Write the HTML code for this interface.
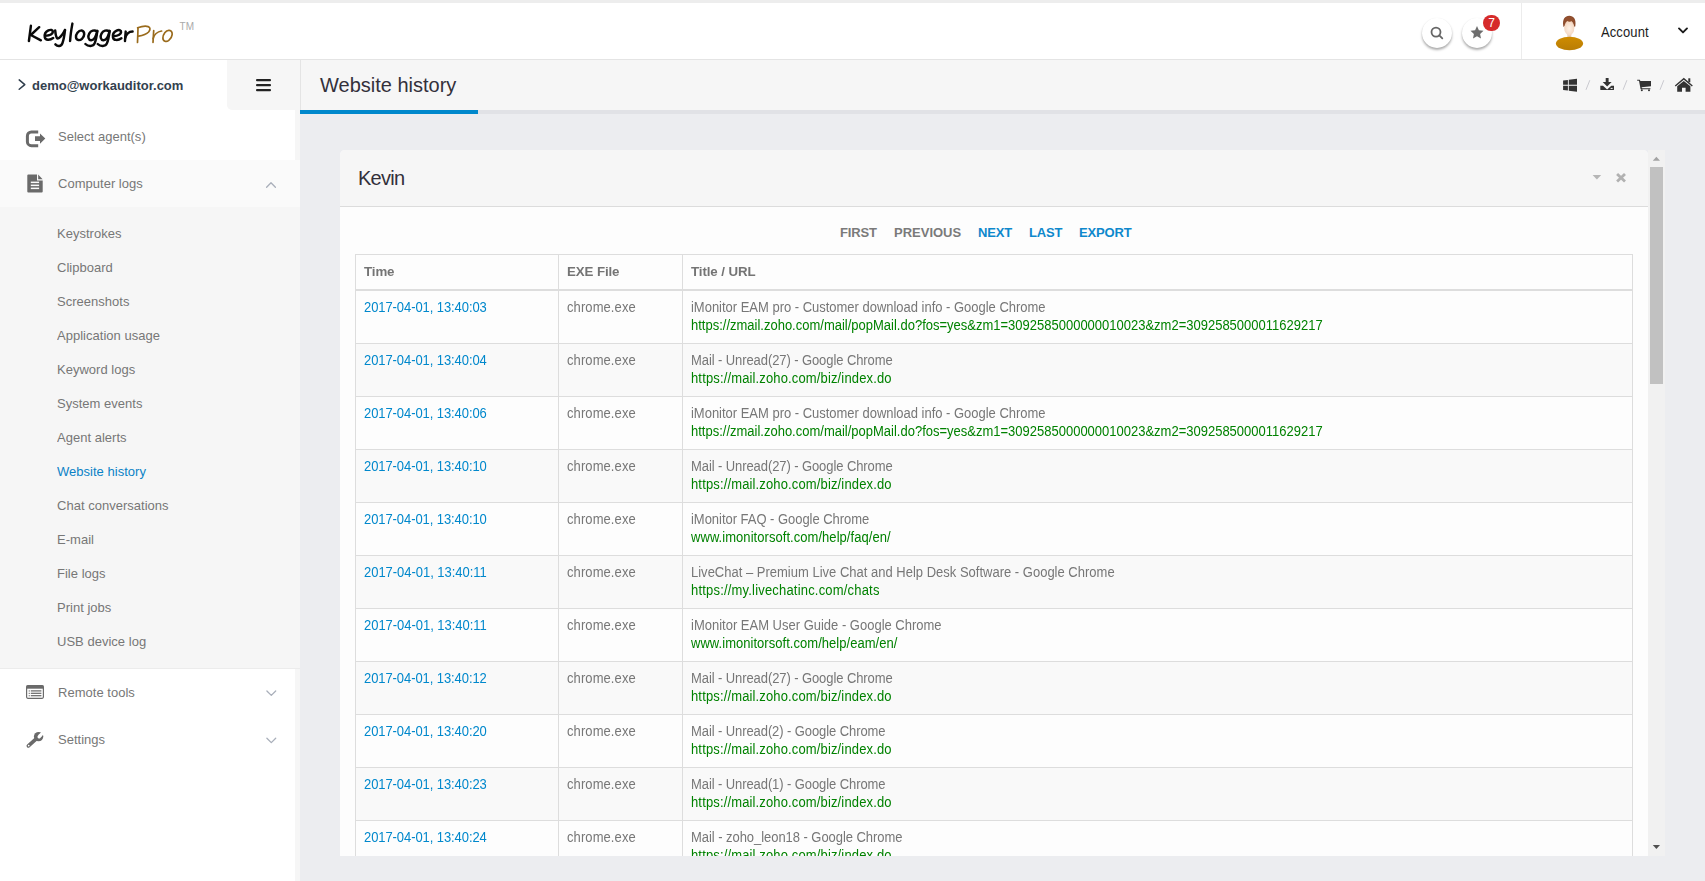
<!DOCTYPE html>
<html>
<head>
<meta charset="utf-8">
<title>Website history</title>
<style>
*{box-sizing:border-box;margin:0;padding:0}
html,body{width:1705px;height:881px;overflow:hidden;background:#ecedf0;font-family:"Liberation Sans",sans-serif;font-size:13px;color:#777}
a{text-decoration:none;color:inherit}
#topstrip{position:absolute;left:0;top:0;width:1705px;height:3px;background:#ededed}
#header{position:absolute;left:0;top:3px;width:1705px;height:57px;background:#fff;border-bottom:1px solid #e4e4e4}
#logo{position:absolute;left:0;top:0}
#sidebar{position:absolute;left:0;top:60px;width:300px;height:821px;background:#f6f6f6}
#sidebar .white{position:absolute;left:0;width:295px;background:#fff}
#userrow{position:absolute;left:0;top:0;width:227px;height:50px;background:#fff}
#userrow .em{position:absolute;left:32px;top:18px;font-size:13px;font-weight:bold;color:#33414e;letter-spacing:0}
#burger{position:absolute;left:227px;top:0;width:73px;height:50px;background:#f6f6f6;border-bottom-left-radius:5px}
.mi{position:absolute;left:0;width:295px;height:47px}
.mi .t{position:absolute;left:58px;top:16px;font-size:13px;letter-spacing:0.02px;transform:scaleY(1.05);transform-origin:50% 72%;color:#777;line-height:16px;white-space:nowrap}
.mi svg{position:absolute}
#sub{position:absolute;left:0;top:147px;width:300px;height:462px;background:#f6f6f6;border-bottom:1px solid #ececec}
#sub a{position:absolute;left:57px;margin-top:1px;font-size:13px;letter-spacing:0.02px;transform:scaleY(1.05);transform-origin:50% 72%;line-height:16px;color:#777;white-space:nowrap}
#sub a.act{color:#0b82c6}
#titlebar{position:absolute;left:300px;top:60px;width:1405px;height:54px;background:#f6f6f6;border-left:1px solid #e4e4e4}
#titlebar .ul{position:absolute;left:-1px;top:50px;width:1405px;height:4px;background:#e1e2e6}
#titlebar .ulb{position:absolute;left:-1px;top:50px;width:178px;height:4px;background:#0088cc}
#titlebar h1{position:absolute;left:19px;top:13px;font-size:20px;font-weight:normal;color:#33303a;line-height:24px;white-space:nowrap}
#panel{position:absolute;left:340px;top:150px;width:1308px;height:706px;background:#fdfdfd;border-top-left-radius:5px;border-top-right-radius:5px;overflow:hidden}
#phead{position:absolute;left:0;top:0;width:1308px;height:57px;background:#f6f6f6;border-bottom:1px solid #dcdcdc}
#phead h2{position:absolute;left:18px;top:16px;font-size:20px;font-weight:normal;color:#33303a;line-height:24px;letter-spacing:-0.75px}
#pager{position:absolute;left:0;top:75px;width:1293px;font-size:13px;font-weight:bold;line-height:16px;color:#7a7a7a;white-space:nowrap}
#pager span{position:absolute;top:0;letter-spacing:-0.15px}
#pager .b{color:#0e88cc}
table{will-change:transform;position:absolute;left:15px;top:104px;width:1278px;border-collapse:separate;border-spacing:0;table-layout:fixed;font-size:13px;border-top:1px solid #ddd;border-left:1px solid #ddd}
th,td{border-right:1px solid #dddddd;border-bottom:1px solid #dddddd;padding:0 8px;text-align:left;vertical-align:top;line-height:18px;white-space:nowrap;overflow:hidden}
th{height:36px;padding-top:8px;color:#747474;font-weight:bold;border-bottom:2px solid #dddddd;font-size:13.3px;letter-spacing:-0.1px}
td{height:53px;padding-top:9px;color:#777;font-size:13px}
td span{display:inline-block;white-space:nowrap;transform:translateY(-0.6px) scaleY(1.06);transform-origin:50% 72%}
tr.odd td{background:#f9f9f9}
td.tm{color:#0088cc}
td .u{color:#008200}
#sb{position:absolute;left:1648px;top:150px;width:17px;height:706px;background:#f1f1f1}
#sb .th{position:absolute;left:2px;top:17px;width:13px;height:217px;background:#c1c1c1}
.cbtn{position:absolute;top:15px;width:30px;height:30px;border-radius:50%;background:#fff;box-shadow:0 2px 2.5px rgba(0,0,0,.33),0 0 1px rgba(0,0,0,.06)}
#badge{position:absolute;left:1483px;top:12px;width:17px;height:16px;border-radius:8px;background:#d62b2b;color:#fff;font-size:12px;line-height:16px;text-align:center}
#hdiv{position:absolute;left:1521px;top:0;width:1px;height:56px;background:#ececec}
#acct{position:absolute;left:1601px;top:22px;font-size:13px;line-height:16px;color:#1c1c1c;letter-spacing:0.1px;transform:scaleY(1.06);transform-origin:50% 72%}
</style>
</head>
<body>
<div id="topstrip"></div>
<div id="header">
<svg id="logo" width="210" height="57" viewBox="0 3 210 57" style="position:absolute;left:0;top:0" fill="none" stroke-linecap="round" stroke-linejoin="round">
<g stroke="#0a0a0a" stroke-width="2.45">
<path d="M30.9 25.8 L28.9 41"/><path d="M39.2 27.2 L30.8 35 L40.9 40.3"/>
<path d="M45.2 35.9 C48.5 35.6 52.6 34.3 52.9 31.9 C53.1 30 50.6 29.3 48.4 30.4 C45.8 31.7 44.3 34.6 44.8 37.2 C45.4 40.2 49.6 40.6 53.2 38"/>
<path d="M55.2 30.5 C55.4 33.5 55.8 36.3 57 38.2 C59 39.6 63 34 65 30"/><path d="M65 30 C64.6 34 63.8 39.5 62.4 43.2 C61 46.8 57.5 46.6 55.4 44.3"/>
<path d="M72.4 23.6 C71.4 29 70.4 35.5 70.1 41"/>
<path d="M81.6 30.4 C78.4 30.6 75.6 34.2 76 37.4 C76.4 40.6 79.8 40.8 82 38.8 C84.6 36.4 85.4 31.6 81.6 30.4 Z"/>
<path d="M96.9 31.2 C94.5 29.6 90.8 30.6 89.2 33.6 C87.6 36.6 88.4 40 91 40.2 C93.6 40.4 96 36.6 97.3 31"/><path d="M97.3 31 C96.8 35 96 40 94.6 43.4 C93.2 46.8 88.2 46.8 85.4 44"/>
<path d="M109.2 31.2 C106.8 29.6 103.1 30.6 101.5 33.6 C99.9 36.6 100.7 40 103.3 40.2 C105.9 40.4 108.3 36.6 109.6 31"/><path d="M109.6 31 C109.1 35 108.3 40 106.9 43.4 C105.5 46.8 100.5 46.8 97.7 44"/>
<path d="M113.4 36.2 C116.7 35.9 120.8 34.5 121.1 32.1 C121.3 30.2 118.8 29.5 116.6 30.6 C114 31.9 112.5 34.8 113 37.4 C113.6 40.4 117.8 40.8 121.4 38.2"/>
<path d="M125.7 31.6 C125.5 34.6 125.1 38 125 41"/><path d="M125.2 38 C126 34.6 128.8 31.4 132.6 31.4"/>
</g>
<g stroke="#9a6b1c" stroke-width="1.7">
<path d="M138 27.8 C137.9 32.6 137.7 37.8 137.5 42.5"/><path d="M137.6 27.8 C141 26.6 145.6 25.8 148.2 26.6 C150.6 27.4 150.4 30 148.6 32 C146.2 34.4 142 35.6 138.6 36.2"/>
<path d="M153.7 30.6 C153.5 34.6 153.2 38.6 153 42.4"/><path d="M153.1 38.6 C154 35 157.4 31.6 161.6 31"/>
<path d="M169.2 30.4 C165.8 30 162.9 34.4 162.9 38 C162.9 41.6 166.4 42.2 168.8 40.4 C172.6 37.6 173.8 31.2 169.2 30.4 Z"/>
</g>
<text x="179.6" y="30.1" font-family="Liberation Sans" font-size="10" fill="#aaaaaa" stroke="none">TM</text>
</svg>
<div class="cbtn" style="left:1422px"><svg width="30" height="30" viewBox="0 0 30 30" fill="none" stroke="#666" stroke-width="1.8"><circle cx="14" cy="14.1" r="4.5"/><path d="M17.3 17.4 L20.3 20.4" stroke-linecap="round"/></svg></div>
<div class="cbtn" style="left:1462px"><svg width="30" height="30" viewBox="0 0 30 30"><path fill="#6e6e6e" d="M15 8 L16.9 12.3 L21.5 12.8 L18.1 15.9 L19 20.5 L15 18.2 L11 20.5 L11.9 15.9 L8.5 12.8 L13.1 12.3 Z"/></svg></div>
<div id="badge">7</div>
<div id="hdiv"></div>
<svg id="avatar" width="30" height="38" viewBox="0 0 30 38" style="position:absolute;left:1555px;top:11px">
<defs><radialGradient id="fg" cx="50%" cy="55%" r="60%"><stop offset="0" stop-color="#fdf1e6"/><stop offset="0.7" stop-color="#f6dcc8"/><stop offset="1" stop-color="#e2b99c"/></radialGradient>
<linearGradient id="bg" x1="0" y1="0" x2="0" y2="1"><stop offset="0" stop-color="#cf8c00"/><stop offset="1" stop-color="#b97d05"/></linearGradient></defs>
<rect x="12.3" y="18" width="4" height="6" fill="#e9d2c0"/>
<ellipse cx="14.5" cy="29.5" rx="13.6" ry="6.7" fill="url(#bg)"/>
<path d="M8.3 12 C7.2 5 10 1.7 14.3 1.7 C18.6 1.7 21.4 5 20.3 12 C20 13.4 19.4 13 19.2 12 L9.4 12 C9.2 13 8.6 13.4 8.3 12 Z" fill="#8a4a2c"/>
<ellipse cx="14.3" cy="13.7" rx="5" ry="7.4" fill="url(#fg)"/>
<path d="M9.2 11.8 C9 7.4 10.8 5.8 12.4 7 C13.8 8.2 15.8 7.8 16.8 6.8 C18.4 6.2 19.6 8 19.4 11.8 C20.4 6.4 18.4 2.6 14.3 2.6 C10.2 2.6 8.2 6.4 9.2 11.8 Z" fill="#93502e"/>
</svg>
<div id="acct">Account</div>
<svg width="12" height="9" viewBox="0 0 12 9" style="position:absolute;left:1677px;top:23px" fill="none" stroke="#1a1a1a" stroke-width="1.9" stroke-linecap="round" stroke-linejoin="round"><path d="M2 2.4 L6 6.4 L10 2.4"/></svg>
</div>
<div id="sidebar">
  <div class="white" style="top:0;height:100px"></div>
  <div id="userrow"><span class="em">demo@workauditor.com</span></div>
  <div id="burger"></div>
  <div class="mi" style="top:53px"><span class="t">Select agent(s)</span></div>
  <div class="mi" style="top:100px;width:300px;background:#fafafa"><span class="t">Computer logs</span></div>
  <div id="sub">
    <a style="top:18px">Keystrokes</a>
    <a style="top:52px">Clipboard</a>
    <a style="top:86px">Screenshots</a>
    <a style="top:120px">Application usage</a>
    <a style="top:154px">Keyword logs</a>
    <a style="top:188px">System events</a>
    <a style="top:222px">Agent alerts</a>
    <a style="top:256px" class="act">Website history</a>
    <a style="top:290px">Chat conversations</a>
    <a style="top:324px">E-mail</a>
    <a style="top:358px">File logs</a>
    <a style="top:392px">Print jobs</a>
    <a style="top:426px">USB device log</a>
  </div>
  <div class="white" style="top:609px;height:212px"></div>
  <div class="mi" style="top:609px"><span class="t">Remote tools</span></div>
  <div class="mi" style="top:656px"><span class="t">Settings</span></div>
</div>
<div id="titlebar"><div class="ul"></div><div class="ulb"></div><h1>Website history</h1></div>
<div id="panel">
  <div id="phead"><h2>Kevin</h2></div>
  <div id="pager"><span style="left:500px">FIRST</span><span style="left:554px;letter-spacing:0">PREVIOUS</span><span class="b" style="left:638px">NEXT</span><span class="b" style="left:689px">LAST</span><span class="b" style="left:739px">EXPORT</span></div>
  <table>
    <colgroup><col style="width:203px"><col style="width:124px"><col></colgroup>
    <tr><th>Time</th><th>EXE File</th><th>Title / URL</th></tr>
<!--ROWS-->
    <tr><td class="tm"><span style="letter-spacing:-0.080px">2017-04-01, 13:40:03</span></td><td><span style="letter-spacing:0.086px">chrome.exe</span></td><td><span style="letter-spacing:-0.016px">iMonitor EAM pro - Customer download info - Google Chrome</span><br><span class="u" style="letter-spacing:-0.002px">https://zmail.zoho.com/mail/popMail.do?fos=yes&amp;zm1=3092585000000010023&amp;zm2=3092585000011629217</span></td></tr>
    <tr class="odd"><td class="tm"><span style="letter-spacing:-0.080px">2017-04-01, 13:40:04</span></td><td><span style="letter-spacing:0.086px">chrome.exe</span></td><td><span style="letter-spacing:-0.087px">Mail - Unread(27) - Google Chrome</span><br><span class="u" style="letter-spacing:0.142px">https://mail.zoho.com/biz/index.do</span></td></tr>
    <tr><td class="tm"><span style="letter-spacing:-0.080px">2017-04-01, 13:40:06</span></td><td><span style="letter-spacing:0.086px">chrome.exe</span></td><td><span style="letter-spacing:-0.016px">iMonitor EAM pro - Customer download info - Google Chrome</span><br><span class="u" style="letter-spacing:-0.002px">https://zmail.zoho.com/mail/popMail.do?fos=yes&amp;zm1=3092585000000010023&amp;zm2=3092585000011629217</span></td></tr>
    <tr class="odd"><td class="tm"><span style="letter-spacing:-0.080px">2017-04-01, 13:40:10</span></td><td><span style="letter-spacing:0.086px">chrome.exe</span></td><td><span style="letter-spacing:-0.087px">Mail - Unread(27) - Google Chrome</span><br><span class="u" style="letter-spacing:0.142px">https://mail.zoho.com/biz/index.do</span></td></tr>
    <tr><td class="tm"><span style="letter-spacing:-0.080px">2017-04-01, 13:40:10</span></td><td><span style="letter-spacing:0.086px">chrome.exe</span></td><td><span style="letter-spacing:-0.033px">iMonitor FAQ - Google Chrome</span><br><span class="u" style="letter-spacing:0.050px">www.imonitorsoft.com/help/faq/en/</span></td></tr>
    <tr class="odd"><td class="tm"><span style="letter-spacing:-0.030px">2017-04-01, 13:40:11</span></td><td><span style="letter-spacing:0.086px">chrome.exe</span></td><td><span style="letter-spacing:0.003px">LiveChat – Premium Live Chat and Help Desk Software - Google Chrome</span><br><span class="u" style="letter-spacing:0.189px">https://my.livechatinc.com/chats</span></td></tr>
    <tr><td class="tm"><span style="letter-spacing:-0.030px">2017-04-01, 13:40:11</span></td><td><span style="letter-spacing:0.086px">chrome.exe</span></td><td><span style="letter-spacing:-0.003px">iMonitor EAM User Guide - Google Chrome</span><br><span class="u" style="letter-spacing:0.037px">www.imonitorsoft.com/help/eam/en/</span></td></tr>
    <tr class="odd"><td class="tm"><span style="letter-spacing:-0.080px">2017-04-01, 13:40:12</span></td><td><span style="letter-spacing:0.086px">chrome.exe</span></td><td><span style="letter-spacing:-0.087px">Mail - Unread(27) - Google Chrome</span><br><span class="u" style="letter-spacing:0.142px">https://mail.zoho.com/biz/index.do</span></td></tr>
    <tr><td class="tm"><span style="letter-spacing:-0.080px">2017-04-01, 13:40:20</span></td><td><span style="letter-spacing:0.086px">chrome.exe</span></td><td><span style="letter-spacing:-0.088px">Mail - Unread(2) - Google Chrome</span><br><span class="u" style="letter-spacing:0.142px">https://mail.zoho.com/biz/index.do</span></td></tr>
    <tr class="odd"><td class="tm"><span style="letter-spacing:-0.080px">2017-04-01, 13:40:23</span></td><td><span style="letter-spacing:0.086px">chrome.exe</span></td><td><span style="letter-spacing:-0.088px">Mail - Unread(1) - Google Chrome</span><br><span class="u" style="letter-spacing:0.142px">https://mail.zoho.com/biz/index.do</span></td></tr>
    <tr><td class="tm"><span style="letter-spacing:-0.080px">2017-04-01, 13:40:24</span></td><td><span style="letter-spacing:0.086px">chrome.exe</span></td><td><span style="letter-spacing:-0.051px">Mail - zoho_leon18 - Google Chrome</span><br><span class="u" style="letter-spacing:0.142px">https://mail.zoho.com/biz/index.do</span></td></tr>
<!--/ROWS-->
  </table>
</div>
<div id="sb"><div class="th"></div></div>
<svg id="icons" width="1705" height="881" viewBox="0 0 1705 881" style="position:absolute;left:0;top:0;pointer-events:none">
<!-- email chevron -->
<path d="M19.2 79.9 L24.8 84.6 L19.2 89.3" fill="none" stroke="#2f3d4c" stroke-width="1.5" stroke-linecap="round" stroke-linejoin="round"/>
<!-- burger -->
<g fill="#222"><rect x="256" y="79" width="15" height="2.2" rx="1"/><rect x="256" y="84" width="15" height="2.2" rx="1"/><rect x="256" y="89" width="15" height="2.2" rx="1"/></g>
<!-- sign-out -->
<path d="M38.2 131.9 H31.4 a4 4 0 0 0 -4 4 v5.8 a4 4 0 0 0 4 4 H38.2" fill="none" stroke="#6a6a6a" stroke-width="3"/>
<path d="M35 136.2 H40 V133.4 L45.3 138.6 L40 143.8 V141 H35 Z" fill="#6a6a6a"/>
<!-- file-text -->
<path d="M28.3 174.4 H37 V180.4 H42.7 V191.6 a1 1 0 0 1 -1 1 H28.3 a1 1 0 0 1 -1 -1 V175.4 a1 1 0 0 1 1 -1 Z" fill="#6a6a6a"/>
<path d="M38.2 174.6 L42.6 179.2 H38.2 Z" fill="#6a6a6a"/>
<g fill="#fafafa"><rect x="30.8" y="181.6" width="8.3" height="1.5"/><rect x="30.8" y="184.6" width="8.3" height="1.5"/><rect x="30.8" y="187.6" width="8.3" height="1.5"/></g>
<!-- chevrons -->
<path d="M266.6 187.2 L271 182.8 L275.4 187.2" fill="none" stroke="#a9afba" stroke-width="1.3" stroke-linecap="round" stroke-linejoin="round"/>
<path d="M266.9 691 L271.3 695.4 L275.7 691" fill="none" stroke="#a9afba" stroke-width="1.3" stroke-linecap="round" stroke-linejoin="round"/>
<path d="M266.9 738.2 L271.3 742.6 L275.7 738.2" fill="none" stroke="#a9afba" stroke-width="1.3" stroke-linecap="round" stroke-linejoin="round"/>
<!-- list-alt -->
<rect x="26.6" y="685.7" width="16.8" height="12.6" rx="1.2" fill="#fff" stroke="#6a6a6a" stroke-width="1.2"/>
<rect x="26.6" y="685.7" width="16.8" height="3" fill="#6a6a6a"/>
<g fill="#666"><rect x="30.8" y="690.3" width="10.6" height="1.2"/><rect x="30.8" y="692.7" width="10.6" height="1.2"/><rect x="30.8" y="695.1" width="10.6" height="1.2"/>
<rect x="28.7" y="690.4" width="1.1" height="1.1"/><rect x="28.7" y="692.8" width="1.1" height="1.1"/><rect x="28.7" y="695.2" width="1.1" height="1.1"/></g>
<!-- wrench -->
<path d="M28.4 745.9 L37 738.2" fill="none" stroke="#6a6a6a" stroke-width="3.7" stroke-linecap="round"/>
<circle cx="38.6" cy="736.6" r="4.7" fill="#6a6a6a"/>
<path d="M39.7 736.1 L44.9 730.5" fill="none" stroke="#fff" stroke-width="3.3"/>
<path d="M39.9 735.9 L39.1 736.8" fill="none" stroke="#fff" stroke-width="3.3" stroke-linecap="round"/>
<circle cx="28.7" cy="745.6" r="0.85" fill="#fff"/>
<!-- toolbar: windows -->
<g fill="#333"><path d="M1563.1 80.5 L1567.9 79.9 V84.8 H1563.1 Z"/><path d="M1568.8 79.8 L1577 78.7 V84.8 H1568.8 Z"/><path d="M1563.1 85.7 H1567.9 V90.6 L1563.1 90 Z"/><path d="M1568.8 85.7 H1577 V91.8 L1568.8 90.7 Z"/></g>
<g stroke="#c9c9cf" stroke-width="1" fill="none"><path d="M1589.8 80.2 L1586 89.8"/><path d="M1626.9 80.2 L1623.1 89.8"/><path d="M1663.8 80.2 L1660 89.8"/></g>
<!-- download -->
<g fill="#333"><path d="M1605.7 77.9 H1608.6 V82 H1611.6 L1607.15 86.6 L1602.7 82 H1605.7 Z"/>
<path d="M1600.3 85.8 H1603 L1607.15 89.4 L1611.3 85.8 H1614 V89.4 a0.7 0.7 0 0 1 -0.7 0.7 H1601 a0.7 0.7 0 0 1 -0.7 -0.7 Z"/></g>
<rect x="1610.6" y="87.9" width="2" height="1" fill="#f6f6f6"/>
<!-- cart -->
<g fill="#333"><path d="M1637.2 79.7 H1639.8 L1640.4 81 H1651 V86.2 L1641.6 87.2 L1641.9 88.2 H1650.4 V89.2 H1640.6 L1639 80.8 H1637.2 Z"/><circle cx="1641.8" cy="90.3" r="1"/><circle cx="1649" cy="90.3" r="1"/></g>
<!-- home -->
<g fill="#333"><path d="M1683.8 77.7 L1692.8 85.4 L1691.9 86.5 L1683.8 79.8 L1675.7 86.5 L1674.8 85.4 Z"/><path d="M1683.8 80.9 L1690.4 86.3 V91.8 H1685.6 V87.8 H1682 V91.8 H1677.2 V86.3 Z"/><rect x="1688.3" y="78.3" width="2" height="4"/></g>
<!-- panel controls -->
<path d="M1592.6 174.9 H1601.2 L1596.9 179.5 Z" fill="#b6b6b6"/>
<path d="M1617.1 173.9 L1625 181.4 M1625 173.9 L1617.1 181.4" stroke="#b1b1b1" stroke-width="2.8" fill="none"/>
<!-- scrollbar arrows -->
<path d="M1652.8 160.7 L1656.4 156.7 L1660 160.7 Z" fill="#a3a3a3"/>
<path d="M1652.8 844.9 L1656.4 848.9 L1660 844.9 Z" fill="#505050"/>
</svg>
</body>
</html>
